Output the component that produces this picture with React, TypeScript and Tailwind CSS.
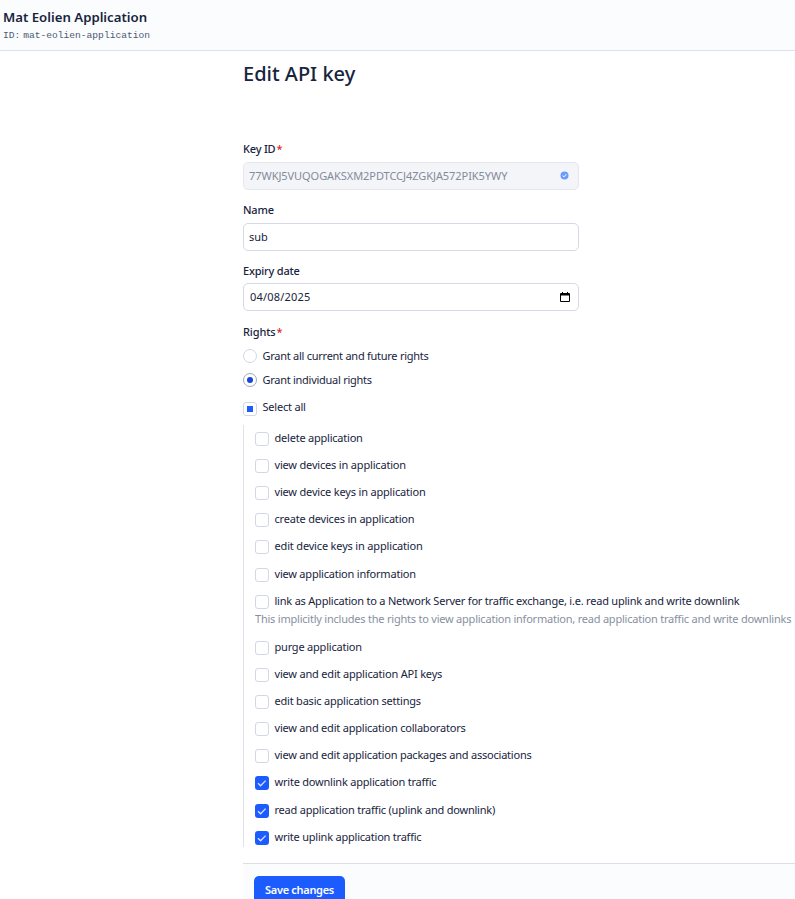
import React from 'react'

type Right = { label: string; tracking: string; checked?: boolean; note?: string }

const rights: Right[] = [
  { label: 'delete application', tracking: 'tracking-[-0.22px]' },
  { label: 'view devices in application', tracking: 'tracking-[-0.18px]' },
  { label: 'view device keys in application', tracking: 'tracking-[-0.18px]' },
  { label: 'create devices in application', tracking: 'tracking-[-0.19px]' },
  { label: 'edit device keys in application', tracking: 'tracking-[-0.17px]' },
  { label: 'view application information', tracking: 'tracking-[-0.21px]' },
  {
    label: 'link as Application to a Network Server for traffic exchange, i.e. read uplink and write downlink',
    tracking: 'tracking-[-0.215px]',
    note: 'This implicitly includes the rights to view application information, read application traffic and write downlinks',
  },
  { label: 'purge application', tracking: 'tracking-[-0.21px]' },
  { label: 'view and edit application API keys', tracking: 'tracking-[-0.19px]' },
  { label: 'edit basic application settings', tracking: 'tracking-[-0.21px]' },
  { label: 'view and edit application collaborators', tracking: 'tracking-[-0.21px]' },
  { label: 'view and edit application packages and associations', tracking: 'tracking-[-0.22px]' },
  { label: 'write downlink application traffic', tracking: 'tracking-[-0.21px]', checked: true },
  { label: 'read application traffic (uplink and downlink)', tracking: 'tracking-[-0.21px]', checked: true },
  { label: 'write uplink application traffic', tracking: 'tracking-[-0.22px]', checked: true },
]

function Checkbox({ checked }: { checked?: boolean }) {
  if (checked) {
    return (
      <span className="flex h-[14px] w-[14px] shrink-0 items-center justify-center rounded-[3px] bg-[#1c5cff]">
        <svg width="14" height="14" viewBox="0 0 14 14" fill="none" stroke="#d6e2ff" strokeWidth="1.3">
          <path d="M3 7.2 5.6 9.8 10.6 4.6" />
        </svg>
      </span>
    )
  }
  return <span className="h-[14px] w-[14px] shrink-0 rounded-[3px] border border-[#d3d7e3] bg-white" />
}

function Field({ label, required, children }: { label: string; required?: boolean; children: React.ReactNode }) {
  return (
    <div className="h-[61px]">
      <div className="flex h-[20px] items-center font-medium tracking-[-0.2px]">
        {label}
        {required && <span className="ml-px text-[#dc2626]">*</span>}
      </div>
      {children}
    </div>
  )
}

export default function App() {
  return (
    <div className="flex h-[899px] w-[795px] flex-col overflow-hidden bg-white font-['Noto_Sans',sans-serif] text-[11px] leading-4 whitespace-nowrap text-[#17243d]">
      <header className="h-[51px] shrink-0 border-b border-[#dbe2ec] bg-[#fbfcfe] pt-[8px] pl-[3px]">
        <div className="text-[13.2px] leading-[18px] font-semibold">Mat Eolien Application</div>
        <div className="mt-[2px] flex gap-[3px] font-['Liberation_Mono',monospace] text-[9.6px] leading-[15px] text-[#4c5a73]">
          <span>ID:</span>
          <span>mat-eolien-application</span>
        </div>
      </header>
      <main className="ml-[243px] flex flex-1 flex-col">
        <h1 className="mt-[8px] h-[80px] text-[20px] leading-[30px] font-medium">Edit API key</h1>
        <Field label="Key ID" required>
          <div className="mt-[3px] flex h-[28px] w-[336px] items-center justify-between rounded-[5px] border border-[#e4e7ef] bg-[#f3f5f9] pr-[9px] pl-[5px] text-[#838b9b]">
            <span className="tracking-[-0.06px]">77WKJ5VUQOGAKSXM2PDTCCJ4ZGKJA572PIK5YWY</span>
            <svg className="mb-[2px]" width="9" height="9" viewBox="0 0 9 9" fill="none">
              <circle cx="4.5" cy="4.5" r="4" fill="#6c9aff" />
              <path d="M2.7 4.6 4 5.9 6.4 3.2" stroke="#fff" strokeWidth="1" />
            </svg>
          </div>
        </Field>
        <Field label="Name">
          <div className="mt-[3px] flex h-[28px] w-[336px] items-center rounded-[5px] border border-[#d5d9e5] bg-white pl-[5px]">sub</div>
        </Field>
        <Field label="Expiry date">
          <div className="mt-[2px] flex h-[28px] w-[336px] items-center justify-between rounded-[5px] border border-[#d5d9e5] bg-white pr-[8px] pl-[6px]">
            <span className="pb-px tracking-[0.2px]">04/08/2025</span>
            <svg width="10" height="11" viewBox="0 0 10 11" fill="#000">
              <path fillRule="evenodd" d="M1 1h1V0h1v1h4V0h1v1h1q1 0 1 1v7q0 1-1 1H1q-1 0-1-1V2q0-1 1-1M1 3.6V9h8V3.6z" />
            </svg>
          </div>
        </Field>
        <div className="flex h-[20px] items-center font-medium tracking-[-0.1px]">
          Rights<span className="ml-px text-[#dc2626]">*</span>
        </div>
        <div className="mt-[1px] flex h-[25px] items-center gap-[5.5px]">
          <span className="h-[14px] w-[14px] rounded-full border border-[#d3d7e3]" />
          <span className="tracking-[-0.26px]">Grant all current and future rights</span>
        </div>
        <div className="flex h-[24px] items-center gap-[5.5px]">
          <span className="flex h-[14px] w-[14px] items-center justify-center rounded-full border border-[#9fa8bd]">
            <span className="h-[6px] w-[6px] rounded-full bg-[#1745d8]" />
          </span>
          <span className="tracking-[-0.27px]">Grant individual rights</span>
        </div>
        <div className="mt-[1px] flex h-[28px] items-center gap-[5.5px]">
          <span className="mt-[3px] flex h-[14px] w-[14px] items-center justify-center rounded-[3px] border border-[#d3d7e3]">
            <span className="h-[6px] w-[6px] bg-[#1c5cff]" />
          </span>
          <span className="tracking-[-0.2px]">Select all</span>
        </div>
        <div className="mt-[4px] h-[422px] shrink-0 border-l border-[#dfe2ea] pl-[11px]">
          {rights.map((r) => (
            <div key={r.label}>
              <div className="flex h-[27.2px] items-center gap-[5.5px]">
                <Checkbox checked={r.checked} />
                <span className={`pb-[2px] ${r.tracking}`}>{r.label}</span>
              </div>
              {r.note && <div className="-mt-[4px] h-[22.6px] tracking-[-0.22px] text-[#8790a1]">{r.note}</div>}
            </div>
          ))}
        </div>
        <footer className="mt-[16px] flex-1 border-t border-[#d9dee7] bg-[#fbfcfe] pt-[12px] pl-[11px]">
          <button className="flex h-[28px] w-[91px] items-center justify-center rounded-[5px] bg-[#1c5cff] font-semibold tracking-[-0.3px] text-white">Save changes</button>
        </footer>
      </main>
    </div>
  )
}
